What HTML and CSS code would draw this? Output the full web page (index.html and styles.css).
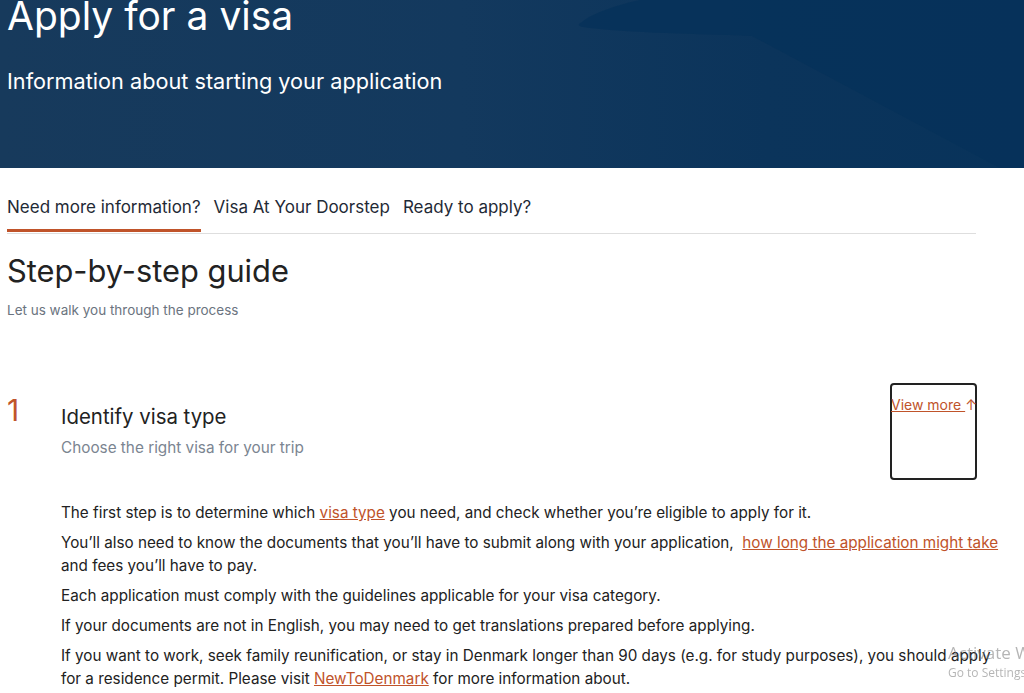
FILE: index.html
```html
<!DOCTYPE html>
<html lang="en">
<head>
<meta charset="utf-8">
<title>Apply for a visa</title>
<link rel="stylesheet" href="styles.css">
</head>
<body>
<header class="hero">
  <svg class="hero-bg" width="1024" height="168" viewBox="0 0 1024 168" aria-hidden="true">
    <path d="M582 22 C590 14 620 4 640 0 L1024 0 L1024 168 L1000 168 L752 36 C720 34 640 34 590 28 C578 27 576 25 582 22 Z" fill="#06325a" opacity="0.75"/>
  </svg>
  <div class="hero-inner">
    <h1 class="hero-title">Apply for a visa</h1>
    <p class="hero-sub">Information about starting your application</p>
  </div>
</header>

<main class="page">
  <nav class="tabs">
    <a class="tab tab-active">Need more information?</a>
    <a class="tab">Visa At Your Doorstep</a>
    <a class="tab">Ready to apply?</a>
  </nav>

  <section class="guide">
    <h2 class="guide-title">Step-by-step guide</h2>
    <p class="guide-sub">Let us walk you through the process</p>

    <article class="step">
      <div class="step-head">
        <span class="step-num">1</span>
        <div class="step-titles">
          <h3 class="step-title">Identify visa type</h3>
          <p class="step-sub">Choose the right visa for your trip</p>
        </div>
        <div class="more-box"><a class="more-link">View more </a><span class="more-arrow">↑</span></div>
      </div>
      <div class="step-body">
        <p>The first step is to determine which <a class="link">visa type</a> you need, and check whether you’re eligible to apply for it.</p>
        <p>You’ll also need to know the documents that you’ll have to submit along with your application, &nbsp;<a class="link">how long the application might take</a> and fees you’ll have to pay.</p>
        <p>Each application must comply with the guidelines applicable for your visa category.</p>
        <p>If your documents are not in English, you may need to get translations prepared before applying.</p>
        <p>If you want to work, seek family reunification, or stay in Denmark longer than 90 days (e.g. for study purposes), you should apply for a residence permit. Please visit <a class="link">NewToDenmark</a> for more information about.</p>
      </div>
    </article>
  </section>
</main>

<div class="watermark">
  <div class="wm-1">Activate Windows</div>
  <div class="wm-2">Go to Settings to activate Windows.</div>
</div>
</body>
</html>
```

FILE: styles.css
```css
* { box-sizing: border-box; }

body {
  margin: 0;
  font-family: Inter, "Noto Sans", sans-serif;
  color: #222;
  background: #fff;
  overflow: hidden;
}

.hero {
  position: relative;
  height: 168px;
  overflow: hidden;
  background: linear-gradient(90deg, #173a5c 0%, #13395e 45%, #0b345b 75%, #08335b 100%);
}

.hero-bg {
  position: absolute;
  left: 0;
  top: 0;
}

.hero-inner {
  position: relative;
  padding: 0 7px;
  color: #fff;
}

.hero-title {
  margin: 0;
  font-size: 39px;
  line-height: 32px;
  font-weight: 400;
}

.hero-sub {
  margin: 36px 0 0;
  font-size: 21.7px;
  line-height: 26px;
  font-weight: 400;
}

.page {
  padding-left: 7px;
  width: 976px;
}

.tabs {
  display: flex;
  gap: 13px;
  margin-top: 29px;
  border-bottom: 1px solid #dedede;
}

.tab {
  font-size: 17px;
  line-height: 20px;
  color: #1f2a36;
  padding-bottom: 12px;
  border-bottom: 3px solid transparent;
  margin-bottom: 1px;
}

.tab-active {
  border-bottom-color: #c0532a;
}

.guide-title {
  margin: 19px 0 0;
  font-size: 30.8px;
  line-height: 36px;
  font-weight: 400;
  color: #222;
}

.guide-sub {
  margin: 13px 0 0;
  font-size: 13.5px;
  line-height: 16px;
  color: #6b7480;
}

.step {
  margin-top: 65px;
}

.step-head {
  display: flex;
  align-items: flex-start;
  margin-right: -1px;
}

.step-num {
  width: 54px;
  margin-top: 12px;
  font-size: 30px;
  line-height: 30px;
  font-weight: 400;
  color: #c0552a;
}

.step-titles {
  flex: 1;
  padding-top: 22px;
}

.step-title {
  margin: 0;
  font-size: 20.4px;
  line-height: 24px;
  font-weight: 400;
  color: #222;
}

.step-sub {
  margin: 9px 0 0;
  font-size: 15.3px;
  line-height: 20px;
  color: #7b8591;
}

.more-box {
  width: 87px;
  height: 97px;
  border: 2px solid #222;
  border-radius: 4px;
  padding-top: 12px;
  font-size: 14px;
  line-height: 16px;
  color: #c0532a;
  white-space: nowrap;
}

.more-box .more-link {
  text-decoration: underline;
  margin-left: -1px;
}

.step-body {
  margin-top: 21px;
  padding-left: 54px;
  width: 994px;
}

.step-body p {
  margin: 0 0 7px;
  font-size: 15.25px;
  line-height: 23px;
  color: #222;
}

.link {
  color: #c0532a;
  text-decoration: underline;
}

.watermark {
  position: fixed;
  left: 948px;
  top: 642px;
  color: rgba(120, 120, 120, 0.55);
  font-family: "Open Sans", sans-serif;
  white-space: nowrap;
}

.wm-1 {
  font-size: 17px;
  line-height: 22px;
}

.wm-2 {
  font-size: 12px;
  line-height: 18px;
}
```
